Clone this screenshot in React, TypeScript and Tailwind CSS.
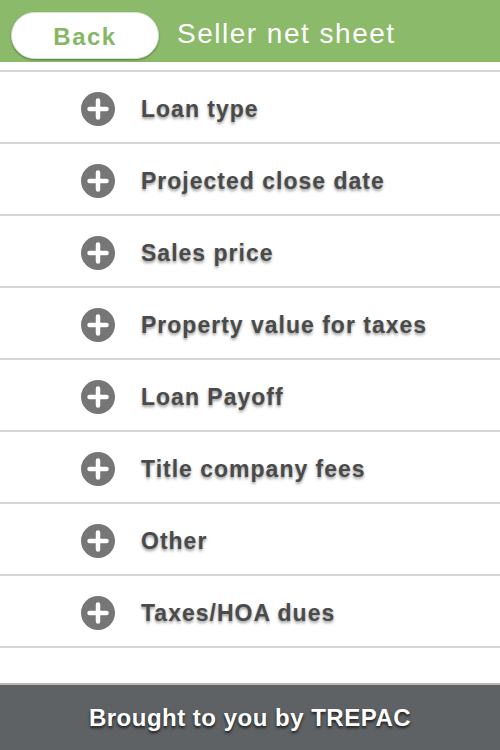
const items = [
  'Loan type',
  'Projected close date',
  'Sales price',
  'Property value for taxes',
  'Loan Payoff',
  'Title company fees',
  'Other',
  'Taxes/HOA dues',
];

function PlusIcon() {
  return (
    <svg width="36" height="36" viewBox="0 0 36 36" className="shrink-0">
      <circle cx="18" cy="18" r="17" fill="#767676" />
      <path d="M18 9.5v17M9.5 18h17" stroke="#fff" strokeWidth="4.5" strokeLinecap="round" />
    </svg>
  );
}

export default function App() {
  return (
    <div className="w-[500px] h-[750px] bg-white flex flex-col overflow-hidden font-['Liberation_Sans',Arial,sans-serif]">
      {/* Header */}
      <header className="h-[62px] bg-[#8bba6a] flex items-start pt-[12px] pl-[11px] shrink-0">
        <button className="w-[148px] h-[47px] rounded-full bg-white border border-[#d9e6cf] shadow-[0_1px_2px_rgba(0,0,0,0.35)] text-[#86b765] text-[24px] font-bold tracking-[1.5px] flex items-center justify-center pt-[3px]">
          Back
        </button>
        <h1 className="ml-[18px] mt-[8px] text-white text-[28px] tracking-[1.5px] leading-none">
          Seller net sheet
        </h1>
      </header>

      {/* List */}
      <div className="pt-[8px] shrink-0">
        <div className="border-t-2 border-[#d6d6d6]">
          {items.map((label) => (
            <div
              key={label}
              className="h-[72px] border-b-2 border-[#d6d6d6] flex items-center pl-[80px] gap-[25px] pt-[4px]"
            >
              <PlusIcon />
              <span className="text-[23px] font-bold tracking-[1px] text-[#4a4a4a] [text-shadow:0_2px_3px_rgba(0,0,0,0.4)]">
                {label}
              </span>
            </div>
          ))}
        </div>
      </div>

      <div className="flex-1" />

      {/* Footer */}
      <footer className="h-[67px] bg-[#5f6264] border-t-2 border-[#b9b9b9] flex items-center justify-center shrink-0">
        <span className="text-white text-[24px] font-bold tracking-[0.5px] [text-shadow:0_2px_3px_rgba(0,0,0,0.75)]">
          Brought to you by TREPAC
        </span>
      </footer>
    </div>
  );
}
